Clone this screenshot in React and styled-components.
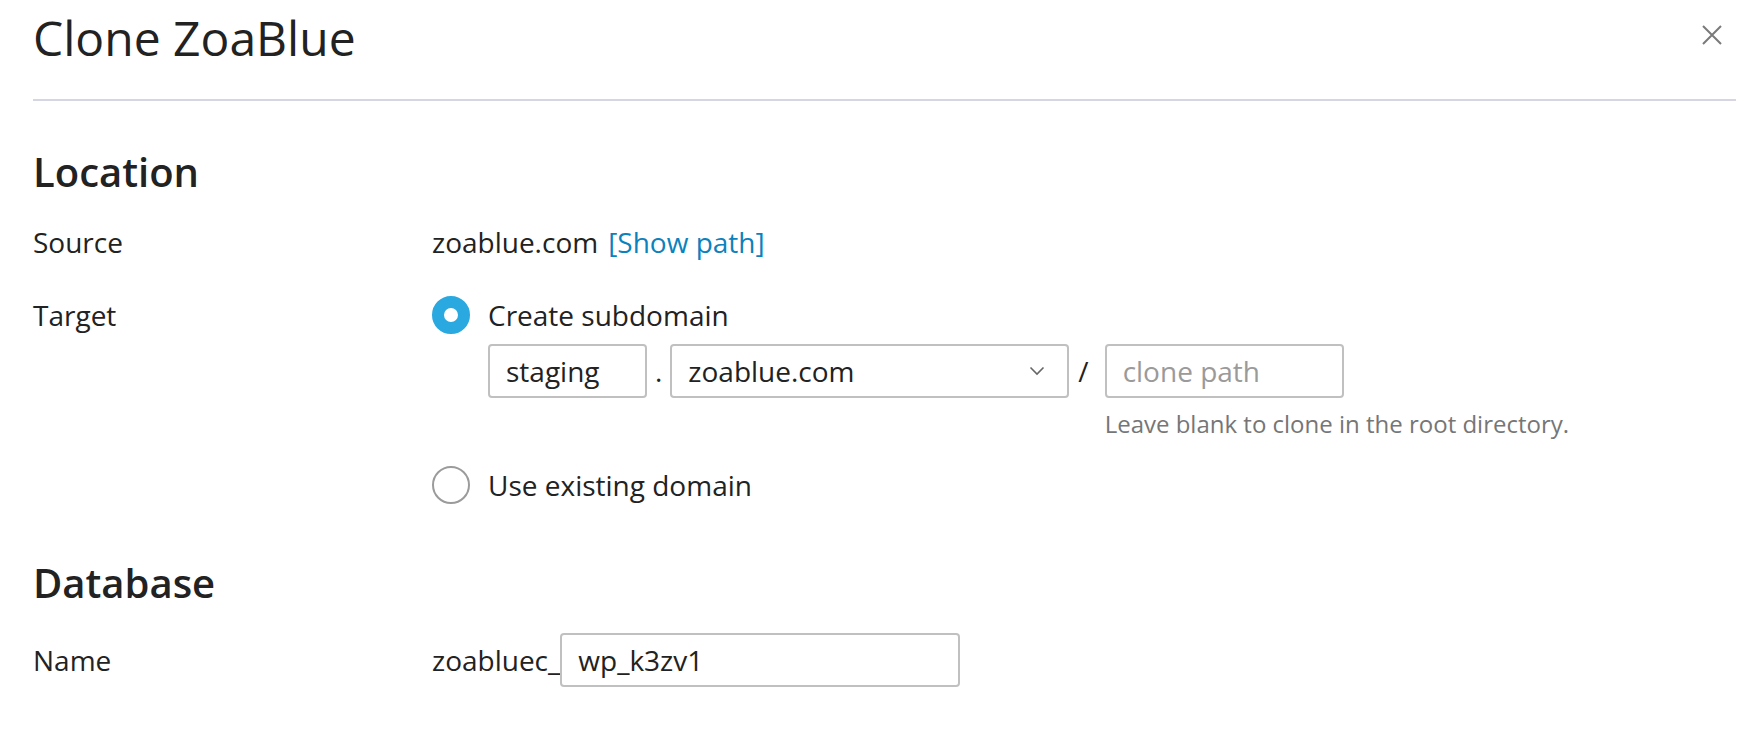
import React from "react";
import styled, { createGlobalStyle } from "styled-components";

const GlobalStyle = createGlobalStyle`
  body {
    margin: 0;
    background: #fff;
    font-family: "Open Sans", "Liberation Sans", sans-serif;
    color: #222;
  }
`;

const Page = styled.div`
  padding: 0 16px 0 33px;
`;

const Header = styled.div`
  display: flex;
  justify-content: space-between;
  align-items: flex-start;
  padding: 6px 0 29px;
  border-bottom: 2px solid #d6d6e2;
`;

const Title = styled.h1`
  margin: 0;
  font-size: 48px;
  font-weight: 400;
  line-height: 64px;
  color: #222;
`;

const CloseButton = styled.button`
  margin: 19px 14px 0 0;
  padding: 0;
  width: 20px;
  height: 20px;
  border: 0;
  background: none;
  cursor: pointer;
  display: flex;
`;

const Section = styled.section`
  margin-top: ${(p) => p.gap}px;
`;

const Heading = styled.h2`
  margin: 0 0 ${(p) => p.after}px;
  font-size: 40px;
  font-weight: 600;
  line-height: 54px;
  color: #222;
`;

const Row = styled.div`
  display: grid;
  grid-template-columns: 399px 1fr;
  align-items: ${(p) => (p.center ? "center" : "start")};
  font-size: 28px;
  line-height: 40px;
  margin-bottom: ${(p) => p.after || 0}px;
`;

const Label = styled.div`
  color: #222;
`;

const Value = styled.div`
  display: flex;
  align-items: center;
`;

const Link = styled.a`
  margin-left: 10px;
  color: #0b82bd;
  text-decoration: none;
  cursor: pointer;
`;

const Options = styled.div`
  display: flex;
  flex-direction: column;
`;

const Option = styled.label`
  display: flex;
  align-items: center;
  gap: 18px;
  height: 40px;
  margin-top: ${(p) => p.gap || 0}px;
  cursor: pointer;
`;

const Radio = styled.span`
  box-sizing: border-box;
  width: 38px;
  height: 38px;
  border-radius: 50%;
  flex-shrink: 0;
  background: #fff;
  border: ${(p) => (p.checked ? "12px solid #2aa8e0" : "2px solid #9b9b9b")};
`;

const SubFields = styled.div`
  display: flex;
  align-items: flex-start;
  margin: 9px 0 0 56px;
`;

const Input = styled.input`
  box-sizing: border-box;
  width: ${(p) => p.w}px;
  height: 54px;
  padding: 0 16px;
  border: 2px solid #c0c0c0;
  border-radius: 4px;
  font-family: inherit;
  font-size: 28px;
  color: #222;
  background: #fff;
  outline: none;

  &::placeholder {
    color: #9a9a9a;
  }
`;

const Select = styled.div`
  box-sizing: border-box;
  width: 399px;
  height: 54px;
  padding: 0 22px 0 16px;
  border: 2px solid #c0c0c0;
  border-radius: 4px;
  display: flex;
  align-items: center;
  justify-content: space-between;
  font-size: 28px;
  color: #222;
`;

const Sep = styled.span`
  font-size: 28px;
  line-height: 54px;
  padding: ${(p) => p.pad};
  color: #222;
`;

const PathField = styled.div`
  display: flex;
  flex-direction: column;
`;

const Hint = styled.div`
  margin-top: 10px;
  font-size: 24px;
  line-height: 32px;
  color: #767676;
  white-space: nowrap;
`;

const Prefix = styled.span`
  color: #222;
`;

const CloseIcon = () => (
  <svg width="20" height="20" viewBox="0 0 20 20">
    <path d="M1 1L19 19M19 1L1 19" stroke="#7a7a7a" strokeWidth="2" fill="none" />
  </svg>
);

const Chevron = () => (
  <svg width="16" height="10" viewBox="0 0 16 10">
    <path d="M1.5 1.5L8 8L14.5 1.5" stroke="#666" strokeWidth="1.6" fill="none" />
  </svg>
);

const App = () => {
  return (
    <Page>
      <GlobalStyle />
      <Header>
        <Title>Clone ZoaBlue</Title>
        <CloseButton aria-label="Close">
          <CloseIcon />
        </CloseButton>
      </Header>

      <Section gap={44}>
        <Heading after={23}>Location</Heading>
        <Row after={33}>
          <Label>Source</Label>
          <Value>
            zoablue.com <Link>[Show path]</Link>
          </Value>
        </Row>
        <Row>
          <Label>Target</Label>
          <Options>
            <Option>
              <Radio checked />
              Create subdomain
            </Option>
            <SubFields>
              <Input w={159} defaultValue="staging" />
              <Sep pad="0 8px">.</Sep>
              <Select>
                zoablue.com
                <Chevron />
              </Select>
              <Sep pad="0 16px 0 9px">/</Sep>
              <PathField>
                <Input w={239} placeholder="clone path" />
                <Hint>Leave blank to clone in the root directory.</Hint>
              </PathField>
            </SubFields>
            <Option gap={25}>
              <Radio />
              Use existing domain
            </Option>
          </Options>
        </Row>
      </Section>

      <Section gap={51}>
        <Heading after={23}>Database</Heading>
        <Row center>
          <Label>Name</Label>
          <Value>
            <Prefix>zoabluec_</Prefix>
            <Input w={400} defaultValue="wp_k3zv1" />
          </Value>
        </Row>
      </Section>
    </Page>
  );
};

export default App;
